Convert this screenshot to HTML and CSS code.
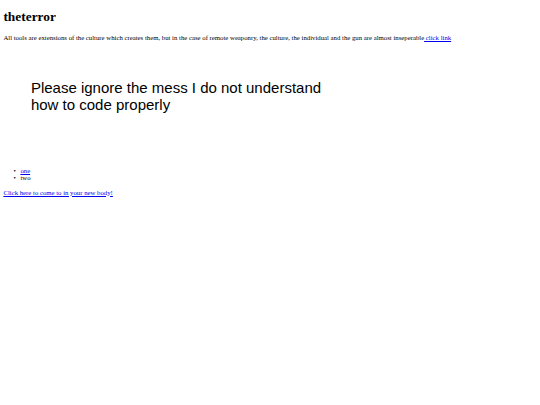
FILE: index.html
```html
<!DOCTYPE html>
<html>
<head>
<meta charset="utf-8">
<link rel="stylesheet" href="styles.css">
</head>
<body>
<h1 class="title">theterror</h1>
<p class="intro">All tools are extensions of the culture which creates them, but in the case of remote weaponry, the culture, the individual and the gun are almost inseperable<a href="#"> click link</a></p>
<div class="notice">Please ignore the mess I do not understand how to code properly</div>
<ul class="items">
<li><a href="#">one</a></li>
<li>two</li>
</ul>
<p class="footer-link"><a href="#">Click here to come to in your new body!</a></p>
</body>
</html>
```
FILE: styles.css
```css
html { background: #fff; }
body {
  margin: 3.4px;
  font-family: "Liberation Serif", "Times New Roman", serif;
  font-size: 6.75px;
  color: #000;
}
a { color: #0000ee; }
.title {
  font-size: 13.4px;
  font-weight: bold;
  margin: 6px 0 8.5px;
}
.intro {
  margin: 6.75px 0;
}
.notice {
  font-family: "Liberation Sans", Arial, sans-serif;
  font-size: 15px;
  width: 310px;
  margin: 38px 0 0 27.5px;
}
.items {
  list-style: none;
  margin: 54px 0 7.75px;
  padding-left: 10px;
}
.items li::before {
  content: "\2022";
  display: inline-block;
  width: 7px;
}
.footer-link {
  margin: 7.75px 0;
}
```
